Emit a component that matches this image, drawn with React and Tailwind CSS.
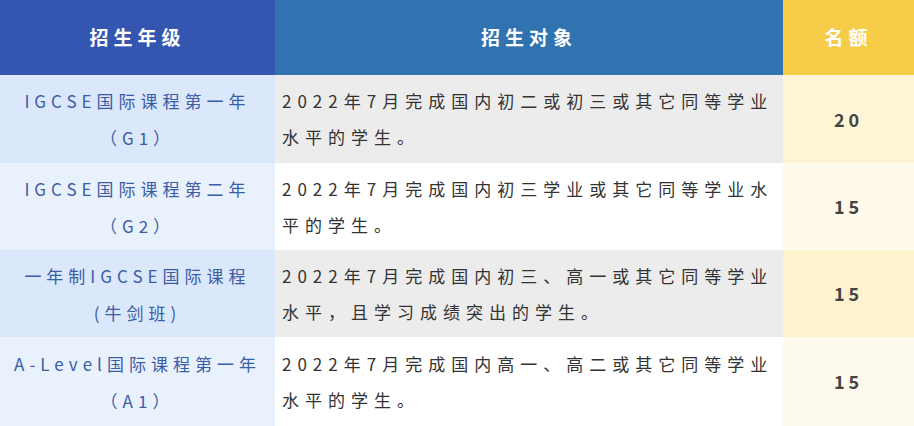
import React from "react";

const rows = [
  {
    grade: ["IGCSE国际课程第一年", "（G1）"],
    target: ["2022年7月完成国内初二或初三或其它同等学业", "水平的学生。"],
    count: "20",
    h: "h-[88px]",
    c1: "bg-[#dbe7fb]",
    c2: "bg-[#ececec]",
    c3: "bg-[#fef5d6]",
  },
  {
    grade: ["IGCSE国际课程第二年", "（G2）"],
    target: ["2022年7月完成国内初三学业或其它同等学业水", "平的学生。"],
    count: "15",
    h: "h-[87px]",
    c1: "bg-[#e9f1fd]",
    c2: "bg-white",
    c3: "bg-[#fffaec]",
  },
  {
    grade: ["一年制IGCSE国际课程", "(牛剑班)"],
    target: ["2022年7月完成国内初三、高一或其它同等学业", "水平，且学习成绩突出的学生。"],
    count: "15",
    h: "h-[87px]",
    c1: "bg-[#dbe7fb]",
    c2: "bg-[#ececec]",
    c3: "bg-[#fff2cf]",
  },
  {
    grade: ["A-Level国际课程第一年", "（A1）"],
    target: ["2022年7月完成国内高一、高二或其它同等学业", "水平的学生。"],
    count: "15",
    h: "h-[89px]",
    c1: "bg-[#e9f1fd]",
    c2: "bg-white",
    c3: "bg-[#fffaee]",
  },
];

const App = () => {
  return (
    <div
      className="w-[914px] h-[426px] overflow-hidden bg-white"
      style={{ fontFamily: '"Noto Sans CJK SC", "Noto Sans", sans-serif' }}
    >
      <div className="grid grid-cols-[275px_508px_131px]">
        {/* Header */}
        <div className="h-[75px] bg-[#3455b0] flex items-center justify-center text-white font-bold text-[19px] tracking-[5px]">
          招生年级
        </div>
        <div className="h-[75px] bg-[#3173b1] flex items-center justify-center text-white font-bold text-[19px] tracking-[5px]">
          招生对象
        </div>
        <div className="h-[75px] bg-[#f7cc48] flex items-center justify-center text-white font-bold text-[19px] tracking-[5px]">
          名额
        </div>

        {rows.map((r, i) => (
          <React.Fragment key={i}>
            <div
              className={`${r.h} ${r.c1} flex flex-col items-center justify-center text-[#3a5da6] text-[17px] tracking-[5px] leading-[37px] whitespace-nowrap`}
            >
              {r.grade.map((l, j) => (
                <span key={j}>{l}</span>
              ))}
            </div>
            <div
              className={`${r.h} ${r.c2} flex flex-col justify-center pl-[7px] text-[#333333] text-[17px] tracking-[6px] leading-[36px] whitespace-nowrap`}
            >
              {r.target.map((l, j) => (
                <span key={j}>{l}</span>
              ))}
            </div>
            <div
              className={`${r.h} ${r.c3} flex items-center justify-center text-[#444444] font-bold text-[18px] tracking-[4px]`}
            >
              {r.count}
            </div>
          </React.Fragment>
        ))}
      </div>
    </div>
  );
};

export default App;
